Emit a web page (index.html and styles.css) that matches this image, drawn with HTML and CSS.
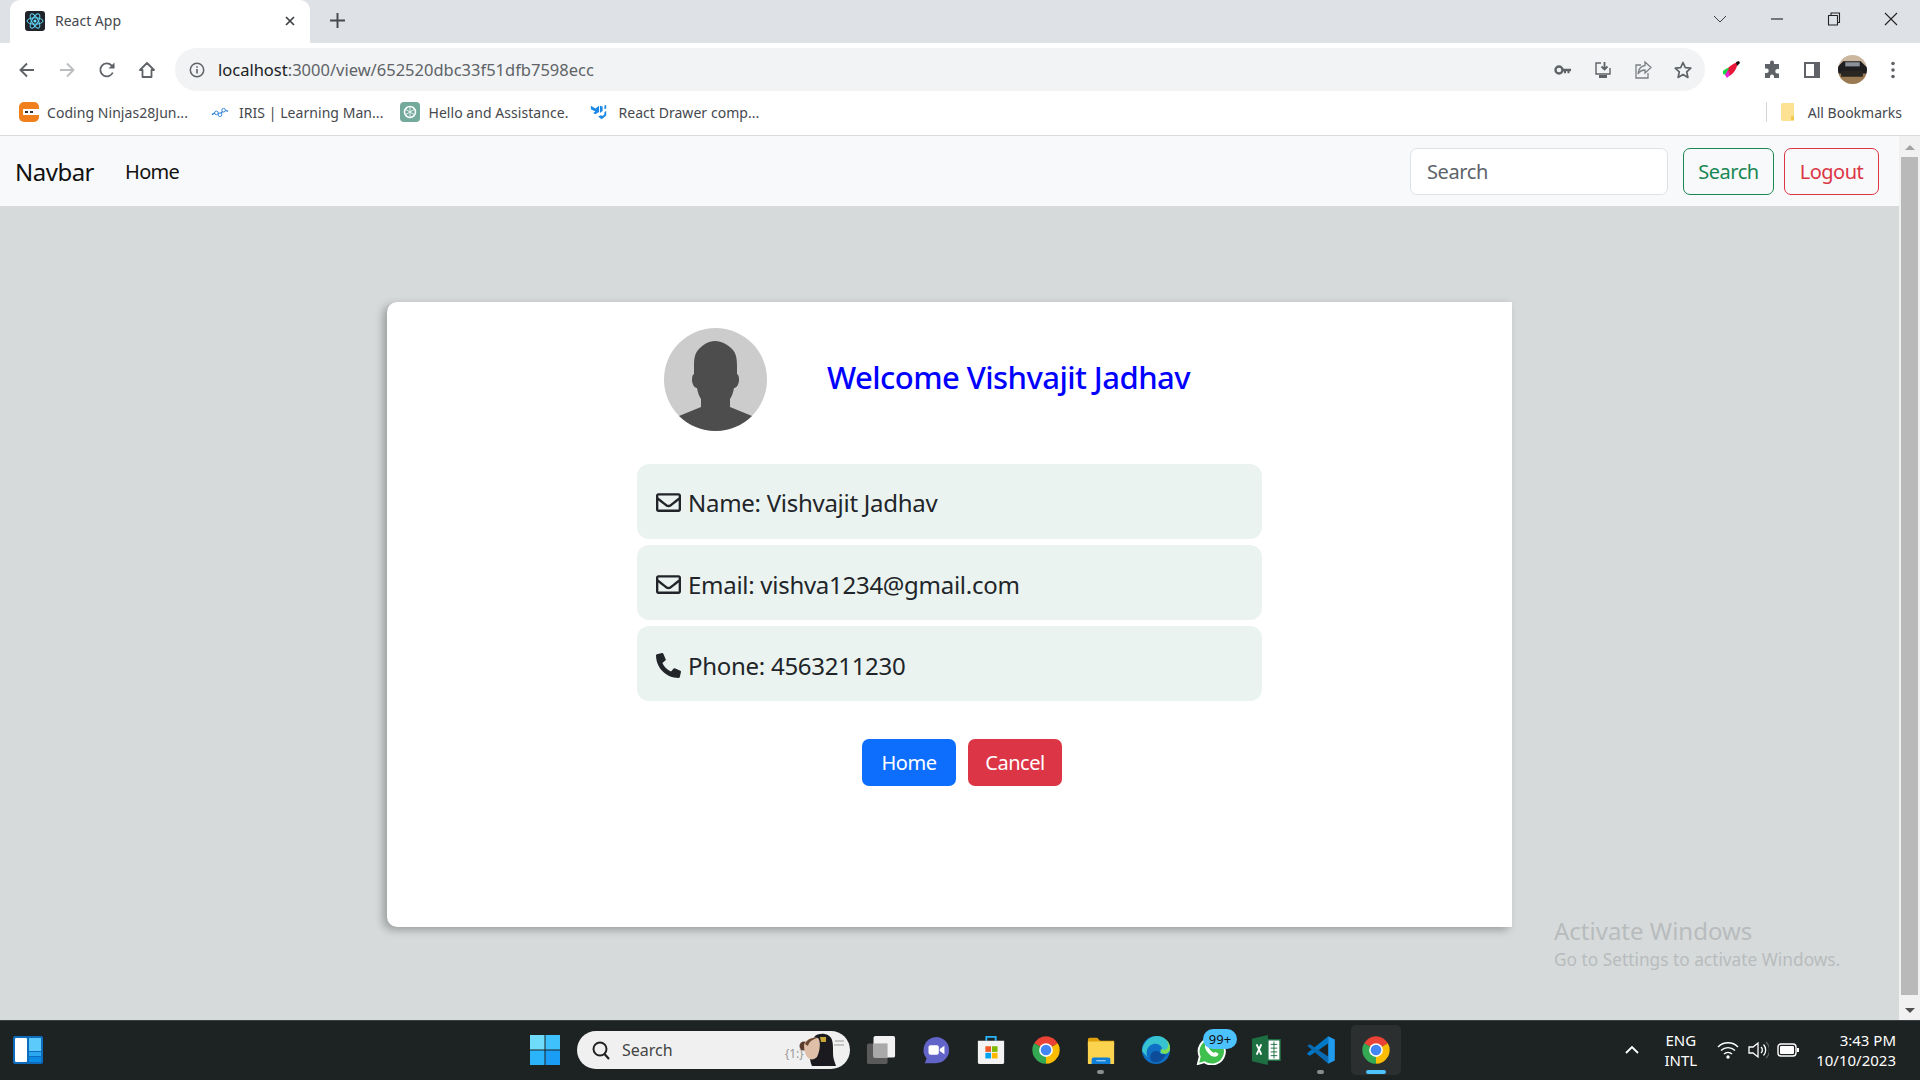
FILE: index.html
```html
<!DOCTYPE html>
<html lang="en">
<head>
    <meta charset="UTF-8">
    <title>React App</title>
    <link rel="stylesheet" href="styles.css">
</head>
<body>
    <svg class="defs" width="0" height="0">
        <symbol id="chrome" viewBox="0 0 48 48">
            <path fill="#ea4335" d="M24 24L5 13A22 22 0 0 1 43 13Z"/>
            <path fill="#fbbc04" d="M24 24L43 13A22 22 0 0 1 24 46Z"/>
            <path fill="#34a853" d="M24 24L24 46A22 22 0 0 1 5 13Z"/>
            <circle cx="24" cy="24" r="11" fill="#fff"/>
            <circle cx="24" cy="24" r="8.5" fill="#4285f4"/>
        </symbol>
        <symbol id="envelope" viewBox="0 0 512 512">
            <path fill="currentColor" d="M464 64H48C21.49 64 0 85.49 0 112v288c0 26.51 21.49 48 48 48h416c26.51 0 48-21.49 48-48V112c0-26.51-21.49-48-48-48zm0 48v40.805c-22.422 18.259-58.168 46.651-134.587 106.49-16.841 13.247-50.201 45.072-73.413 44.701-23.208.375-56.579-31.459-73.413-44.701C106.18 199.465 70.425 171.067 48 152.805V112h416zM48 400V214.398c22.914 18.251 55.409 43.862 104.938 82.646 21.857 17.205 60.134 55.186 103.062 54.955 42.717.231 80.509-37.199 103.053-54.947 49.528-38.783 82.032-64.401 104.947-82.653V400H48z"/>
        </symbol>
    </svg>

    <!-- browser chrome -->
    <div class="tabstrip">
        <div class="tab">
            <svg class="favicon" viewBox="0 0 20 20">
                <rect width="20" height="20" rx="3" fill="#20232a"/>
                <g fill="none" stroke="#61dafb" stroke-width="1">
                    <ellipse cx="10" cy="10" rx="8" ry="3.2"/>
                    <ellipse cx="10" cy="10" rx="8" ry="3.2" transform="rotate(60 10 10)"/>
                    <ellipse cx="10" cy="10" rx="8" ry="3.2" transform="rotate(120 10 10)"/>
                </g>
                <circle cx="10" cy="10" r="1.6" fill="#61dafb"/>
            </svg>
            <span class="tab-title">React App</span>
            <svg class="tab-close" viewBox="0 0 12 12"><path d="M2 2l8 8M10 2l-8 8" stroke="#3c4043" stroke-width="1.7"/></svg>
        </div>
        <svg class="new-tab" viewBox="0 0 16 16"><path d="M8 1v14M1 8h14" stroke="#45484d" stroke-width="1.8"/></svg>
        <div class="window-btns">
            <svg viewBox="0 0 16 16"><path d="M2 5l6 6 6-6" fill="none" stroke="#3c4043"/></svg>
            <svg viewBox="0 0 16 16"><path d="M2 8h12" stroke="#222" stroke-width="1.1"/></svg>
            <svg viewBox="0 0 16 16"><path d="M2.5 4.5h9v9.5h-9zM5 4.5V2h8.500v9.500H11.500" fill="none" stroke="#222" stroke-width="1.1" stroke-linejoin="round"/></svg>
            <svg viewBox="0 0 16 16"><path d="M2 2l12 12M14 2L2 14" stroke="#222" stroke-width="1.1"/></svg>
        </div>
    </div>

    <div class="toolbar">
        <div class="nav-btns">
            <svg viewBox="0 0 20 20"><path d="M17 10H4M10 3.5L3.5 10l6.5 6.5" fill="none" stroke="#5f6368" stroke-width="1.9"/></svg>
            <svg viewBox="0 0 20 20"><path d="M3 10h13M10 3.5l6.5 6.5-6.5 6.5" fill="none" stroke="#bbbdc0" stroke-width="1.9"/></svg>
            <svg viewBox="0 0 20 20"><path d="M15.8 12.5A6.5 6.5 0 1 1 14.5 5.3L17 7.5" fill="none" stroke="#5f6368" stroke-width="1.8"/><path d="M17.5 2.5v6h-6z" fill="#5f6368"/></svg>
            <svg viewBox="0 0 20 20"><path d="M10 3L3 10h2.5v7h9v-7H17z" fill="none" stroke="#5f6368" stroke-width="1.8" stroke-linejoin="round"/></svg>
        </div>
        <div class="omnibox">
            <svg class="info" viewBox="0 0 16 16"><circle cx="8" cy="8" r="6.7" fill="none" stroke="#5f6368" stroke-width="1.5"/><path d="M8 7v4.5M8 4.2v1.600" stroke="#5f6368" stroke-width="1.6"/></svg>
            <span class="url"><span class="host">localhost</span>:3000/view/652520dbc33f51dfb7598ecc</span>
            <div class="omni-icons">
                <svg viewBox="0 0 20 20"><circle cx="6" cy="10" r="3.5" fill="none" stroke="#5f6368" stroke-width="2.4"/><path d="M9 8.7h9v2.600h-1.500v2h-2v-2h-1.500v2h-2v-2H9z" fill="#5f6368"/></svg>
                <svg viewBox="0 0 20 20"><path d="M8 3H3v11h14v-6" fill="none" stroke="#5f6368" stroke-width="1.4"/><path d="M11.5 2v7M8.500 6.500l3 3 3-3" fill="none" stroke="#5f6368" stroke-width="1.8"/><path d="M6 15h8v3H6z" fill="#5f6368"/></svg>
                <svg viewBox="0 0 20 20"><path d="M8 5H3v13h12v-5" fill="none" stroke="#7c7f84" stroke-width="1.3"/><path d="M12 2l6 5.5-6 5.500V10c-3.500 0-5.500 1.500-7 4 .5-5 3-8 7-8.500z" fill="none" stroke="#7c7f84" stroke-width="1.3"/></svg>
                <svg viewBox="0 0 20 20"><path d="M10 2.5l2.300 5.100 5.500.6-4.100 3.700 1.200 5.500L10 14.600l-4.900 2.800 1.200-5.500-4.100-3.700 5.500-.6z" fill="none" stroke="#5f6368" stroke-width="1.7" stroke-linejoin="round"/></svg>
            </div>
        </div>
        <div class="ext-icons">
            <svg viewBox="0 0 20 20">
                <path d="M3 12c2-4 7-8 13-10-1 6-4 12-9 14z" fill="#e8173a"/>
                <path d="M1 11c2-2 4-3 6-3l-3 7-3-1z" fill="#1bd641"/>
                <path d="M3 15l3-5 2 5-3 3z" fill="#e81fd6"/>
                <path d="M14 2l3-1 1 2-3 3z" fill="#111"/>
            </svg>
            <svg viewBox="0 0 20 20"><path d="M8 2.5a2 2 0 0 1 4 0V4h5v5h-1.500a2.200 2.200 0 0 0 0 4.500H17V18h-5v-1.500a2 2 0 0 0-4 0V18H3v-5h1.500a2.200 2.200 0 0 0 0-4.500H3V4h5z" fill="#5f6368"/></svg>
            <svg viewBox="0 0 20 20"><rect x="2" y="2" width="16" height="16" fill="#5f6368"/><rect x="4" y="4" width="8" height="12" fill="#fff"/></svg>
            <svg class="profile" viewBox="0 0 28 28">
                <rect width="28" height="28" fill="#cbb79f"/>
                <path d="M0 11l5-5h17l6 6v6H0z" fill="#1d1d20"/>
                <rect x="7" y="7" width="14" height="4" fill="#8a9097"/>
                <path d="M0 18h28v10H0z" fill="#9a7a52"/>
                <path d="M3 15h21v6H3z" fill="#2a2622"/>
            </svg>
            <svg viewBox="0 0 20 20"><circle cx="10" cy="3.5" r="1.8" fill="#5f6368"/><circle cx="10" cy="10" r="1.8" fill="#5f6368"/><circle cx="10" cy="16.5" r="1.8" fill="#5f6368"/></svg>
        </div>
    </div>

    <div class="bookmarks">
        <a class="bookmark bookmark-coding">
            <svg viewBox="0 0 20 20"><rect width="20" height="20" rx="5" fill="#f0801e"/><rect x="4" y="7" width="16" height="6" fill="#fff"/><rect x="6" y="9" width="3" height="2" fill="#333"/><rect x="11" y="9" width="3" height="2" fill="#333"/></svg>
            Coding Ninjas28Jun...
        </a>
        <a class="bookmark bookmark-narrow">
            <svg viewBox="0 0 20 20"><path d="M1 13l5-3 4 3 4-5 5 1" fill="none" stroke="#2a7fd5" stroke-width="1.5"/><circle cx="6" cy="11" r="2" fill="#fff" stroke="#2a7fd5"/><circle cx="10" cy="13" r="2" fill="#fff" stroke="#2a7fd5"/><circle cx="14" cy="8" r="2" fill="#fff" stroke="#2a7fd5"/></svg>
            IRIS | Learning Man...
        </a>
        <a class="bookmark bookmark-chat">
            <svg viewBox="0 0 20 20"><rect width="20" height="20" rx="4" fill="#74aa9c"/><circle cx="10" cy="10" r="5.5" fill="none" stroke="#fff" stroke-width="1.5"/><path d="M10 4.5v11M5 7l10 6M15 7L5 13" stroke="#fff" stroke-width=".8"/></svg>
            Hello and Assistance.
        </a>
        <a class="bookmark bookmark-narrow">
            <svg viewBox="0 0 20 20"><path d="M1 3l5 3 4-3v7L6 12.500 3.500 11 6 9.500 1 7zM11 3l3 1v5l-3 2zM18 2v4l-2 1V3zM18 9v5l-5 4-4-3 3-1.500 2 1 2-2V10z" fill="#1e88e5"/></svg>
            React Drawer comp...
        </a>
        <div class="all-bookmarks">
            <svg viewBox="0 0 16 20"><path d="M1 3a2 2 0 0 1 2-2h11v18H3a2 2 0 0 1-2-2z" fill="#fde293"/><path d="M14 14v4h-3v-2a2 2 0 0 1 3-2z" fill="#f2c94c"/></svg>
            All Bookmarks
        </div>
    </div>

    <!-- the page itself -->
    <div class="viewport">
        <div class="page">
            <nav class="navbar">
                <a class="brand">Navbar</a>
                <a class="nav-link">Home</a>
                <form class="nav-form">
                    <input class="search-input" type="text" placeholder="Search">
                    <button class="btn btn-outline-green" type="button">Search</button>
                    <button class="btn btn-outline-red" type="button">Logout</button>
                </form>
            </nav>

            <div class="card">
                <div class="card-head">
                    <svg class="avatar" viewBox="0 0 103 103">
                        <rect width="103" height="103" fill="#ccc"/>
                        <path fill="#4d4d4d" d="M51 13C44 13 39 17 35 21C31 25 30 30 30 38L30 46C28 47 28 50 28 53C29 58 31 60 33 60C34 65 35 68 37 71L37 79L15 88L15 103L88 103L88 88L66 79L66 71C68 68 69 65 70 60C72 60 74 58 75 53C75 50 75 47 73 46L73 38C73 30 72 25 68 21C64 17 58 13 51 13Z"/>
                    </svg>
                    <h2 class="welcome">Welcome Vishvajit Jadhav</h2>
                </div>

                <ul class="info-list">
                    <li class="info-row">
                        <svg class="row-icon"><use href="#envelope"/></svg>
                        Name: Vishvajit Jadhav
                    </li>
                    <li class="info-row">
                        <svg class="row-icon"><use href="#envelope"/></svg>
                        Email: vishva1234@gmail.com
                    </li>
                    <li class="info-row">
                        <svg class="row-icon" viewBox="0 0 512 512"><path fill="currentColor" d="M497.39 361.8l-112-48a24 24 0 0 0-28 6.9l-49.6 60.6A370.66 370.66 0 0 1 130.6 204.11l60.6-49.6a23.94 23.94 0 0 0 6.9-28l-48-112A24.16 24.16 0 0 0 122.6.61l-104 24A24 24 0 0 0 0 48c0 256.5 207.9 464 464 464a24 24 0 0 0 23.4-18.6l24-104a24.29 24.29 0 0 0-14.01-27.6z"/></svg>
                        Phone: 4563211230
                    </li>
                </ul>

                <div class="card-actions">
                    <button class="btn btn-blue" type="button">Home</button>
                    <button class="btn btn-red" type="button">Cancel</button>
                </div>
            </div>

            <div class="activate">
                <div class="activate-title">Activate Windows</div>
                <div class="activate-sub">Go to Settings to activate Windows.</div>
            </div>
        </div>

        <div class="scrollbar">
            <div class="arrow-up"></div>
            <div class="thumb"></div>
            <div class="arrow-down"></div>
        </div>
    </div>

    <!-- windows taskbar -->
    <div class="taskbar">
        <svg class="widgets" viewBox="0 0 30 28">
            <rect width="30" height="28" rx="2" fill="#0f6cbd"/>
            <rect x="2" y="2" width="12" height="24" rx="1" fill="#fff"/>
            <rect x="16" y="2" width="12" height="13" fill="#5ccbfb"/>
            <rect x="16" y="16" width="12" height="4" fill="#2aa7ee"/>
            <rect x="16" y="21" width="12" height="5" fill="#0a8ce6"/>
        </svg>
        <svg class="start" viewBox="0 0 30 30">
            <rect width="14.5" height="14.5" fill="#6fdcfb"/>
            <rect x="15.5" width="14.5" height="14.5" fill="#3fc1fb"/>
            <rect y="15.5" width="14.5" height="14.5" fill="#2cb4fb"/>
            <rect x="15.5" y="15.5" width="14.5" height="14.5" fill="#1a9df5"/>
        </svg>
        <div class="task-search">
            <svg class="task-search-icon" viewBox="0 0 20 20"><circle cx="9" cy="9" r="6.5" fill="none" stroke="#222" stroke-width="2"/><path d="M13.5 14l4.5 5" stroke="#222" stroke-width="2.2"/></svg>
            <span>Search</span>
            <span class="task-search-brace">{1:}</span>
            <svg class="ada" viewBox="0 0 48 36">
                <path d="M14 34c-4-8-2-24 3-30 5-4 15-3 17 4 2 7 0 14 2 20l2 6z" fill="#1b1a1e"/>
                <circle cx="6" cy="14" r="4.5" fill="#5a3a28"/>
                <path d="M6 13c1-6 9-9 14-7 3 3 2 13-1 19-3 3-6 3-9 1-3-3-4-8-4-13z" fill="#e0bfa8"/>
                <path d="M7 12c2-5 8-7 12-6-3 1-8 3-9 8z" fill="#6a4632"/>
                <path d="M22 5h6v5h-5z" fill="#c8a534"/>
                <path d="M37 9h9M36 13h10" stroke="#999" stroke-width="1"/>
            </svg>
        </div>
        <div class="task-item">
            <svg viewBox="0 0 32 32"><rect x="1" y="9" width="22" height="22" rx="2" fill="#5a5a5a"/><rect x="8" y="1" width="23" height="23" rx="2" fill="#f2f2f2"/><rect x="8" y="9" width="15" height="15" fill="#a9a9a9"/></svg>
        </div>
        <div class="task-item">
            <svg viewBox="0 0 32 32"><path d="M16 2a14 14 0 0 1 0 28H4l2-5A14 14 0 0 1 16 2z" fill="#6264c8"/><rect x="8" y="11" width="11" height="10" rx="2" fill="#fff"/><path d="M20 15l5-3.5v9L20 17z" fill="#fff"/></svg>
        </div>
        <div class="task-item">
            <svg viewBox="0 0 32 32"><path d="M11 6V2h10v4" fill="none" stroke="#29b5f6" stroke-width="2"/><path d="M2 6h28v23a2 2 0 0 1-2 2H4a2 2 0 0 1-2-2z" fill="#f3f3f3"/><rect x="10" y="12" width="6" height="6" fill="#ef5a24"/><rect x="17" y="12" width="6" height="6" fill="#7fba00"/><rect x="10" y="19" width="6" height="6" fill="#00a4ef"/><rect x="17" y="19" width="6" height="6" fill="#ffb900"/></svg>
        </div>
        <div class="task-item"><svg viewBox="0 0 32 32"><use href="#chrome"/></svg></div>
        <div class="task-item task-open">
            <svg viewBox="0 0 32 32"><path d="M2 5a2 2 0 0 1 2-2h8l3 3h15v6H2z" fill="#e0a10e"/><rect x="2" y="7" width="28" height="24" rx="1" fill="#fcd34f"/><path d="M8 24h16a2 2 0 0 1 2 2v5H6v-5a2 2 0 0 1 2-2z" fill="#0d7fd8"/><rect x="11" y="27" width="10" height="1" fill="#cfe8fb"/></svg>
        </div>
        <div class="task-item">
            <svg viewBox="0 0 32 32"><circle cx="16" cy="16" r="15" fill="#0f6fc5"/><path d="M1 17C2 7 10 1 17 1c8 0 14 6 14 13 0 4-3 6-7 6-3 0-4-1-4-2 2-1 3-3 2-5-2-4-8-5-12-2-4 3-5 8-3 13" fill="#37c3d0"/><path d="M31 14c0-7-6-13-14-13 8 0 12 5 12 10 0 3-2 5-5 5l-3-1c0 3 1 5 4 5 4 0 6-3 6-6z" fill="#7fdc55"/><path d="M10 22c1-5 6-6 10-4 1 3 4 3 7 2-3 7-9 10-13 9-3-1-5-4-4-7z" fill="#0c4c99"/></svg>
        </div>
        <div class="task-item">
            <svg viewBox="0 0 32 32"><path d="M2 31l2-8A14 14 0 1 1 9 29z" fill="#3fc04e" stroke="#fff" stroke-width="2"/><path d="M11 9c-2 2-2 5 1 9s7 6 9 5c2 0 3-2 3-3l-3-2-2 1c-2-1-4-3-5-5l1-2-2-3z" fill="#fff"/></svg>
            <span class="badge">99+</span>
        </div>
        <div class="task-item">
            <svg viewBox="0 0 32 32"><path d="M1 4L18 0v32L1 28z" fill="#1d6f42"/><path d="M18 5h13v22H18z" fill="#fff" stroke="#1d6f42" stroke-width="1.5"/><path d="M21 10h7M21 14h7M21 18h7M21 22h7M24.5 7v18" stroke="#1d6f42"/><path d="M6 10l5 11M11 10L6 21" stroke="#fff" stroke-width="2"/></svg>
        </div>
        <div class="task-item task-open">
            <svg viewBox="0 0 100 100"><path d="M74 4L74 28L13 69L4 64L4 61Z" fill="#0078c8"/><path d="M4 36L13 31L74 72L74 96Z" fill="#0a6bb5"/><path d="M74 4L96 15V85L74 96Z" fill="#1f9cf0"/></svg>
        </div>
        <div class="task-item task-active"><svg viewBox="0 0 32 32"><use href="#chrome"/></svg></div>

        <div class="tray">
            <svg class="tray-chevron" viewBox="0 0 16 10"><path d="M2 8l6-6 6 6" fill="none" stroke="#fff" stroke-width="1.8"/></svg>
            <div class="lang">ENG<br>INTL</div>
            <div class="tray-icons">
                <svg viewBox="0 0 22 20"><path d="M1 7a14 14 0 0 1 20 0M4 10.5a10 10 0 0 1 14 0M7 14a6 6 0 0 1 8 0" fill="none" stroke="#fff" stroke-width="1.4"/><circle cx="11" cy="17" r="1.7" fill="#fff"/></svg>
                <svg viewBox="0 0 22 20"><path d="M2 7h4l5-4v14l-5-4H2z" fill="none" stroke="#fff" stroke-width="1.3"/><path d="M14 7a4 4 0 0 1 0 6M16.5 4.5a8 8 0 0 1 0 11" fill="none" stroke="#fff" stroke-width="1.3"/><path d="M19 2a11 11 0 0 1 0 16" fill="none" stroke="#666" stroke-width="1.1"/></svg>
                <svg viewBox="0 0 22 20"><rect x="1" y="4" width="18" height="12" rx="3" fill="none" stroke="#fff" stroke-width="1.4"/><rect x="3" y="6" width="14" height="8" rx="1" fill="#fff"/><rect x="20" y="8" width="2" height="4" fill="#fff"/></svg>
            </div>
            <div class="clock">3:43 PM<br>10/10/2023</div>
        </div>
    </div>
</body>
</html>
```

FILE: styles.css
```css
* {
    box-sizing: border-box;
}

html, body {
    margin: 0;
    height: 100%;
    overflow: hidden;
}

body {
    display: flex;
    flex-direction: column;
    width: 1920px;
    height: 1080px;
    font-family: "Noto Sans", "Open Sans", sans-serif;
    color: #212529;
}

.defs {
    position: absolute;
}

/* browser chrome */
.tabstrip {
    display: flex;
    align-items: flex-end;
    height: 43px;
    padding-left: 10px;
    background-color: #dee1e6;
}

.tab {
    display: flex;
    align-items: center;
    width: 300px;
    height: 43px;
    padding: 0 14px 2px 15px;
    background-color: #fff;
    border-radius: 10px 10px 0 0;
}

.favicon {
    width: 20px;
    height: 20px;
}

.tab-title {
    flex: 1;
    margin-left: 10px;
    font-size: 14px;
    color: #45484d;
}

.tab-close {
    width: 12px;
    height: 12px;
}

.new-tab {
    width: 17px;
    height: 17px;
    margin: 0 0 14px 19px;
}

.window-btns {
    display: flex;
    align-items: center;
    gap: 41px;
    height: 43px;
    margin-left: auto;
    padding: 0 21px 6px 0;
}

.window-btns svg {
    width: 16px;
    height: 16px;
}

.toolbar {
    display: flex;
    align-items: center;
    height: 48px;
    padding-top: 5px;
    background-color: #fff;
}

.nav-btns {
    display: flex;
    gap: 20px;
    padding-left: 17px;
}

.nav-btns svg {
    width: 20px;
    height: 20px;
}

.omnibox {
    display: flex;
    align-items: center;
    width: 1530px;
    height: 43px;
    margin-left: 18px;
    padding: 0 12px 0 14px;
    background-color: #f1f3f4;
    border-radius: 22px;
}

.info {
    width: 16px;
    height: 16px;
}

.url {
    margin-left: 13px;
    font-size: 16.5px;
    color: #5f6368;
}

.host {
    color: #202124;
}

.omni-icons {
    display: flex;
    gap: 20px;
    margin-left: auto;
}

.omni-icons svg {
    width: 20px;
    height: 20px;
}

.ext-icons {
    display: flex;
    align-items: center;
    gap: 20px;
    margin-left: 17px;
}

.ext-icons svg {
    width: 20px;
    height: 20px;
}

.ext-icons .profile {
    width: 29px;
    height: 29px;
    margin: 0 -4px 0 -4px;
    border-radius: 50%;
}

.bookmarks {
    display: flex;
    align-items: center;
    height: 45px;
    padding-left: 19px;
    padding-bottom: 2px;
    background-color: #fff;
    border-bottom: 1px solid #d9dbdd;
}

.bookmark {
    display: flex;
    align-items: center;
    gap: 8px;
    margin-right: 20px;
    font-size: 14px;
    letter-spacing: 0.05px;
    color: #45484d;
}

.bookmark svg {
    width: 20px;
    height: 20px;
}

.bookmark-coding {
    margin-right: 23px;
}

.bookmark-chat {
    margin-right: 22px;
}

.bookmark-narrow {
    margin-right: 17px;
}

.bookmark-narrow svg {
    width: 18px;
    margin-right: 2px;
}

.all-bookmarks {
    display: flex;
    align-items: center;
    gap: 12px;
    height: 20px;
    margin-left: auto;
    padding: 0 18px 0 13px;
    border-left: 1px solid #d2d4d7;
    font-size: 14px;
    color: #45484d;
}

.all-bookmarks svg {
    width: 16px;
    height: 20px;
}

/* page */
.viewport {
    display: flex;
    flex: 1;
    min-height: 0;
}

.page {
    position: relative;
    flex: 1;
    background-color: #d6dadb;
}

.navbar {
    display: flex;
    align-items: center;
    height: 70px;
    padding: 0 20px 0 15px;
    background-color: #f8f9fa;
}

.brand {
    font-size: 24px;
    letter-spacing: -0.5px;
    color: #111;
}

.nav-link {
    margin-left: 31px;
    font-size: 20px;
    letter-spacing: -0.7px;
    color: #111;
}

.nav-form {
    display: flex;
    gap: 15px;
    margin-left: auto;
}

.search-input {
    width: 258px;
    height: 47px;
    padding: 0 16px;
    font-family: inherit;
    font-size: 20px;
    letter-spacing: -0.4px;
    background-color: #fff;
    border: 1px solid #dee2e6;
    border-radius: 7px;
}

.search-input::placeholder {
    color: #5c636a;
}

.btn {
    height: 47px;
    padding: 0 16px;
    font-family: inherit;
    font-size: 20px;
    letter-spacing: -0.5px;
    background: none;
    border: 1px solid transparent;
    border-radius: 7px;
}

.btn-outline-green {
    width: 91px;
    padding: 0;
    color: #198754;
    border-color: #198754;
}

.btn-outline-red {
    width: 95px;
    padding: 0;
    margin-left: -5px;
    color: #dc3545;
    border-color: #dc3545;
}

.card {
    width: 1125px;
    height: 625px;
    margin: 96px auto 0;
    padding-top: 26px;
    background-color: #fff;
    border-radius: 10px 0 0 10px;
    box-shadow: -4px 3px 8px rgba(0, 0, 0, 0.28);
}

.card-head {
    display: flex;
    align-items: center;
    padding-left: 277px;
}

.avatar {
    width: 103px;
    height: 103px;
    border-radius: 50%;
}

.welcome {
    margin: 0 0 6px 60px;
    font-size: 31px;
    font-weight: 500;
    letter-spacing: -0.55px;
    color: #0000ff;
}

.info-list {
    display: flex;
    flex-direction: column;
    gap: 6px;
    width: 625px;
    margin: 33px 0 0 250px;
    padding: 0;
    list-style: none;
}

.info-row {
    display: flex;
    align-items: center;
    gap: 7px;
    height: 75px;
    padding: 3px 0 0 19px;
    font-size: 24px;
    letter-spacing: -0.28px;
    background-color: #ebf3f0;
    border-radius: 12px;
}

.info-row:first-child {
    padding-top: 1px;
}

.row-icon {
    width: 25px;
    height: 25px;
}

.card-actions {
    display: flex;
    gap: 12px;
    margin: 38px 0 0 475px;
}

.btn-blue,
.btn-red {
    width: 94px;
    padding: 0;
    color: #fff;
}

.btn-blue {
    background-color: #0d6efd;
}

.btn-red {
    background-color: #dc3545;
}

.activate {
    position: absolute;
    left: 1554px;
    top: 779px;
    color: #b8bcbd;
}

.activate-title {
    font-size: 24px;
    line-height: 32px;
}

.activate-sub {
    font-size: 17.3px;
    line-height: 26px;
}

.scrollbar {
    display: flex;
    flex-direction: column;
    align-items: center;
    width: 21px;
    background-color: #f1f1f1;
}

.thumb {
    flex: 1;
    width: 17px;
    margin: 7px 0 13px;
    background-color: #b9b9b9;
}

.arrow-up,
.arrow-down {
    width: 0;
    height: 0;
    border-left: 5px solid transparent;
    border-right: 5px solid transparent;
}

.arrow-up {
    margin-top: 9px;
    border-bottom: 5px solid #a3a3a3;
}

.arrow-down {
    margin-bottom: 7px;
    border-top: 5px solid #505050;
}

/* taskbar */
.taskbar {
    display: flex;
    align-items: center;
    height: 60px;
    padding: 0 0 1px 13px;
    background-color: #1d2222;
    border-top: 1px solid #3a3e3e;
}

.widgets {
    width: 30px;
    height: 28px;
}

.start {
    width: 30px;
    height: 30px;
    margin-left: 487px;
}

.task-search {
    position: relative;
    display: flex;
    align-items: center;
    width: 273px;
    height: 38px;
    margin: 0 3px 0 17px;
    padding-left: 14px;
    font-size: 16px;
    color: #444;
    background-color: #f0f0f0;
    border-radius: 19px;
}

.task-search-icon {
    width: 20px;
    height: 20px;
    margin-right: 11px;
}

.task-search-brace {
    margin: 6px 0 0 112px;
    font-size: 12px;
    color: #999;
}

.ada {
    position: absolute;
    right: 4px;
    top: 1px;
    width: 48px;
    height: 36px;
}

.task-item {
    position: relative;
    display: flex;
    align-items: center;
    justify-content: center;
    width: 55px;
    height: 50px;
}

.task-item svg {
    width: 30px;
    height: 30px;
}

.task-open::after,
.task-active::after {
    content: "";
    position: absolute;
    left: 50%;
    bottom: 1px;
    width: 7px;
    height: 4px;
    margin-left: -3.5px;
    background-color: #8a8d8d;
    border-radius: 2px;
}

.task-active {
    width: 50px;
    margin-left: 2.5px;
    background-color: #2b2f2f;
    border-radius: 5px;
}

.task-active::after {
    width: 20px;
    margin-left: -10px;
    background-color: #4cc2ff;
}

.badge {
    position: absolute;
    left: 20px;
    top: 4px;
    width: 34px;
    height: 20px;
    font-size: 13px;
    line-height: 20px;
    text-align: center;
    color: #111;
    background-color: #4cc2ff;
    border-radius: 10px;
}

.tray {
    display: flex;
    align-items: center;
    margin-left: auto;
    padding-right: 24px;
    font-size: 15px;
    line-height: 20px;
    color: #fff;
}

.tray-chevron {
    width: 16px;
    height: 10px;
}

.lang {
    margin-left: 25px;
    text-align: center;
}

.tray-icons {
    display: flex;
    gap: 8px;
    margin-left: 20px;
}

.tray-icons svg {
    width: 22px;
    height: 20px;
}

.clock {
    margin-left: 17px;
    text-align: right;
}
```
